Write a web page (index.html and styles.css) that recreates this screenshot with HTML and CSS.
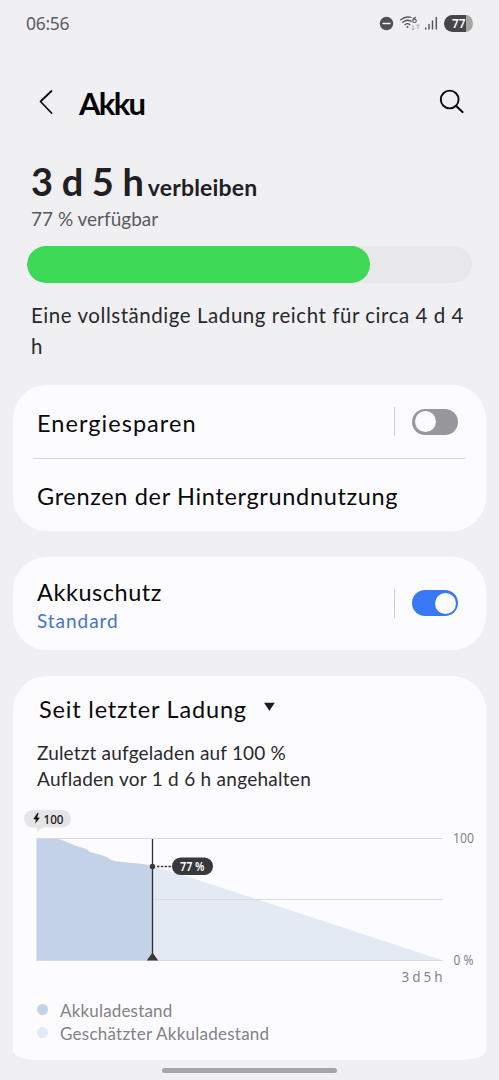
FILE: index.html
```html
<!DOCTYPE html>
<html lang="de">
<head>
<meta charset="utf-8">
<meta name="viewport" content="width=device-width">
<title>Akku</title>
<link rel="stylesheet" href="styles.css">
</head>
<body>
<div class="screen">
  <header class="status">
    <span class="clock">06:56</span>
    <svg class="status-icons" width="96" height="22" viewBox="378 12 96 22">
      <circle cx="386.500" cy="23.500" r="6.700" fill="#505052"/>
      <path d="M383 23.500h7" stroke="#f1f1f3" stroke-width="1.500" stroke-linecap="round"/>
      <g fill="none" stroke="#58585a" stroke-width="1.300" stroke-linecap="round">
        <path d="M400.700 19.800Q405 16 411 17.400M402.700 22.300Q407 18.700 411.200 21.400M404.900 24.700Q407.500 22.700 410 24.700"/>
      </g>
      <circle cx="407.500" cy="27" r="1" fill="#58585a"/>
      <path d="M416 17.200Q412.800 17.800 412.700 20.600M414.600 19.100a1.700 1.700 0 1 1-.1 0" fill="none" stroke="#58585a" stroke-width="1.100"/>
      <path d="M413 25v5M411.500 28.500l1.500 1.500 1.500-1.500M418 29v-4.500M416.500 26l1.500-1.500 1.500 1.500" fill="none" stroke="#b0b0b3" stroke-width="1"/>
      <path d="M425.700 28v1M429 24.500v4.500M432.500 21v8M436.300 17.500v11.500" stroke="#58585a" stroke-width="1.500" stroke-linecap="round"/>
      <path d="M466 15h-13.500a8.500 8.500 0 0 0 0 17H466z" fill="#464648"/>
      <path d="M466 15a7 8.500 0 0 1 0 17z" fill="#a5a5a8"/>
      <text class="status-battery" x="452" y="28" textLength="13.500" lengthAdjust="spacingAndGlyphs">77</text>
    </svg>
  </header>

  <div class="titlebar">
    <svg class="back" width="16" height="26" viewBox="0 0 16 26"><path d="M13.500 2L2.500 12.500l11 11.500" fill="none" stroke="#0c0c0e" stroke-width="1.800" stroke-linecap="round" stroke-linejoin="round"/></svg>
    <h1 class="title">Akku</h1>
    <svg class="search" width="26" height="26" viewBox="0 0 26 26"><circle cx="10.700" cy="10.500" r="8.900" fill="none" stroke="#0c0c0e" stroke-width="1.900"/><path d="M17.200 17l6.300 6" stroke="#0c0c0e" stroke-width="2.200" stroke-linecap="round"/></svg>
  </div>

  <section class="summary">
    <div class="remaining"><span class="duration">3 d 5 h</span><span class="remaining-label">verbleiben</span></div>
    <div class="available">77 % verfügbar</div>
    <div class="meter"><div class="meter-fill" style="width:77.100%"></div></div>
    <p class="estimate">Eine vollständige Ladung reicht für circa 4 d 4<br>h</p>
  </section>

  <section class="card card-power">
    <div class="row row-first"><span class="label l-saving">Energiesparen</span><span class="control"><span class="toggle"><span class="knob"></span></span></span></div>
    <div class="row row-second"><span class="label l-limits">Grenzen der Hintergrundnutzung</span></div>
  </section>

  <section class="card card-protect">
    <div class="row row-protect">
      <div class="stack"><span class="label l-protect">Akkuschutz</span><span class="value">Standard</span></div>
      <span class="control"><span class="toggle on"><span class="knob"></span></span></span>
    </div>
  </section>

  <section class="card card-usage">
    <div class="picker"><span class="label l-since">Seit letzter Ladung</span><svg width="13" height="9" viewBox="0 0 13 9"><path d="M1 .8h10.800L6.400 8.800z" fill="#1c1c1f"/></svg></div>
    <div class="info i-last">Zuletzt aufgeladen auf 100 %</div>
    <div class="info i-stop">Aufladen vor 1 d 6 h angehalten</div>
    <svg class="chart" width="473" height="190" viewBox="13 804 473 190">
      <rect x="24" y="810" width="47" height="17.500" rx="8.750" fill="#e5e5e7"/>
      <path d="M36.500 827h7L37 831.500z" fill="#e5e5e7"/>
      <path d="M37.500 812.800l-4.200 6.400 2.700.3-.9 4.300 4.800-6.100-2.700-.3 1.400-4.300z" fill="#151517"/>
      <text class="chip-text" x="43.500" y="823.500" textLength="20" lengthAdjust="spacingAndGlyphs">100</text>
      <path d="M152.500 866L183 875l260 85.500H152.500z" fill="#e4eaf4"/>
      <path d="M36.500 838.500H55C64 839.500 68 843 75 845.500L86 849 90 852 101 855 108 857.500C111 861 116 861.300 123 862L143 864 152.500 866V960.500h-116z" fill="#c4d2e7"/>
      <g stroke="#d7dbe2" stroke-width="1"><path d="M36 838.500h407M153 899.500h290M36 960.500h407"/></g>
      <path d="M152.500 839v121" stroke="#303033" stroke-width="1.300"/>
      <path d="M152.500 952.500l5.700 8h-11.400z" fill="#38383b"/>
      <circle cx="152.500" cy="866.500" r="2.700" fill="#38383b"/>
      <path d="M157 866.500h15" stroke="#38383b" stroke-width="1.300" stroke-dasharray="2.500 1.300"/>
      <rect x="172" y="857.500" width="41" height="17.500" rx="8.700" fill="#38383b"/>
      <text class="now-text" x="180" y="871.300" textLength="24.500" lengthAdjust="spacingAndGlyphs">77 %</text>
      <g class="axis">
        <text x="453" y="843" textLength="21" lengthAdjust="spacingAndGlyphs">100</text>
        <text x="453.500" y="965" textLength="20" lengthAdjust="spacingAndGlyphs">0 %</text>
        <text x="401.500" y="981.500" textLength="41">3 d 5 h</text>
      </g>
    </svg>
    <ul class="legend">
      <li><span class="dot"></span><span class="g-level">Akkuladestand</span></li>
      <li><span class="dot light"></span><span class="g-est">Geschätzter Akkuladestand</span></li>
    </ul>
  </section>
  <div class="home"></div>
</div>
</body>
</html>
```
FILE: styles.css
```css
* { box-sizing: border-box; }
body { margin: 0; background: #f0f0f2; font-family: Lato, "Open Sans", sans-serif; color: #09090b; }
.screen { width: 499px; height: 1080px; overflow: hidden; display: flex; flex-direction: column; white-space: nowrap; }

.status { height: 48px; flex: none; display: flex; justify-content: space-between; align-items: flex-start; padding: 12px 25px 0 26px; }
.clock { font: 17.5px/22px "Noto Sans", sans-serif; color: #5b5b5e; letter-spacing: -0.3px; }
.status-battery { font: 600 12.500px "Noto Sans", sans-serif; fill: #fff; }

.titlebar { height: 107px; flex: none; display: flex; align-items: flex-start; padding: 41px 34px 0 38px; }
.back { flex: none; }
.title { margin: -6px auto 0 25px; font-size: 31px; line-height: 40px; font-weight: 700; letter-spacing: -1.7px; color: #050506; }

.summary { height: 230px; flex: none; padding: 3px 27px 0; }
.remaining { height: 48px; display: flex; align-items: baseline; padding-left: 4px; line-height: 48px; color: #202023; }
.duration { margin-top: -1px; font-size: 38px; font-weight: 700; letter-spacing: -0.3px; }
.remaining-label { margin-left: 4px; font-size: 23px; font-weight: 700; letter-spacing: 0.2px; }
.available { height: 26px; padding-left: 4px; font-size: 19px; line-height: 26px; color: #5a5a5d; }
.meter { height: 37px; margin-top: 14px; border-radius: 19px; background: #e8e8ea; overflow: hidden; }
.meter-fill { height: 37px; border-radius: 19px; background: #3cd856; }
.estimate { margin: 17px 0 0 4px; font-size: 20.500px; line-height: 30.500px; letter-spacing: 0.550px; color: #28282b; }

.card { flex: none; width: 473px; margin-left: 13px; border-radius: 34px; background: #fcfcfe; }
.card-power { height: 145.500px; padding: 0 21px 0 20px; }
.row { display: flex; justify-content: space-between; align-items: center; }
.row-first { height: 74px; padding: 0 7px 0 4px; border-bottom: 1px solid #d8d8dc; }
.row-second { height: 71px; padding: 2px 4px 0; }
.label { font-size: 23.500px; line-height: 30px; }
.l-saving { padding-top: 2px; letter-spacing: 1.050px; }
.l-limits { letter-spacing: 0.660px; }
.l-protect { letter-spacing: 0.550px; }
.l-since { letter-spacing: 0.820px; }
.control { display: flex; align-items: center; height: 29px; padding-left: 17px; border-left: 1px solid #cdcdd2; }
.toggle { width: 46px; height: 26px; padding: 2.500px; border-radius: 13px; background: #98989c; display: flex; }
.toggle.on { background: #3878f5; justify-content: flex-end; }
.knob { width: 21px; height: 21px; border-radius: 50%; background: #fcfcfe; }

.card-protect { height: 93.500px; margin-top: 26px; padding: 0 28px 0 24px; }
.row-protect { height: 93px; }
.stack { display: flex; flex-direction: column; padding-top: 4px; }
.value { margin-top: 1px; font-size: 19px; line-height: 26px; letter-spacing: 0.950px; color: #4774c4; }

.card-usage { height: 384px; margin-top: 26px; padding-top: 18px; border-radius: 34px 34px 26px 26px / 34px 34px 9px 9px; }
.picker { height: 46px; display: flex; align-items: flex-start; padding-left: 26px; }
.picker svg { margin: 8px 0 0 16px; }
.info { height: 25.500px; padding-left: 24px; font-size: 19px; line-height: 25.500px; color: #29292c; }
.i-last { letter-spacing: 0.180px; }
.i-stop { letter-spacing: 0.270px; }
.chart { display: block; margin-top: 13px; }
.chip-text { font: 500 12.500px "Noto Sans", sans-serif; fill: #151517; }
.now-text { font: 600 12px "Noto Sans", sans-serif; fill: #fff; }
.axis { font: 13.500px "Noto Sans", sans-serif; fill: #858588; }
.legend { list-style: none; margin: 6px 0 0; padding: 0 0 0 24px; font-size: 17px; line-height: 22.500px; color: #828285; }
.legend li { display: flex; align-items: flex-start; height: 22.500px; }
.g-level { letter-spacing: 0.180px; }
.g-est { letter-spacing: 0.250px; }
.dot { width: 11px; height: 11px; margin: 4px 12px 0 0; border-radius: 50%; background: #c4d2e7; }
.dot.light { background: #e4eaf4; }
.home { flex: none; width: 175px; height: 5px; margin: 8px 0 0 162px; border-radius: 3px; background: #a5a5a7; }
```
